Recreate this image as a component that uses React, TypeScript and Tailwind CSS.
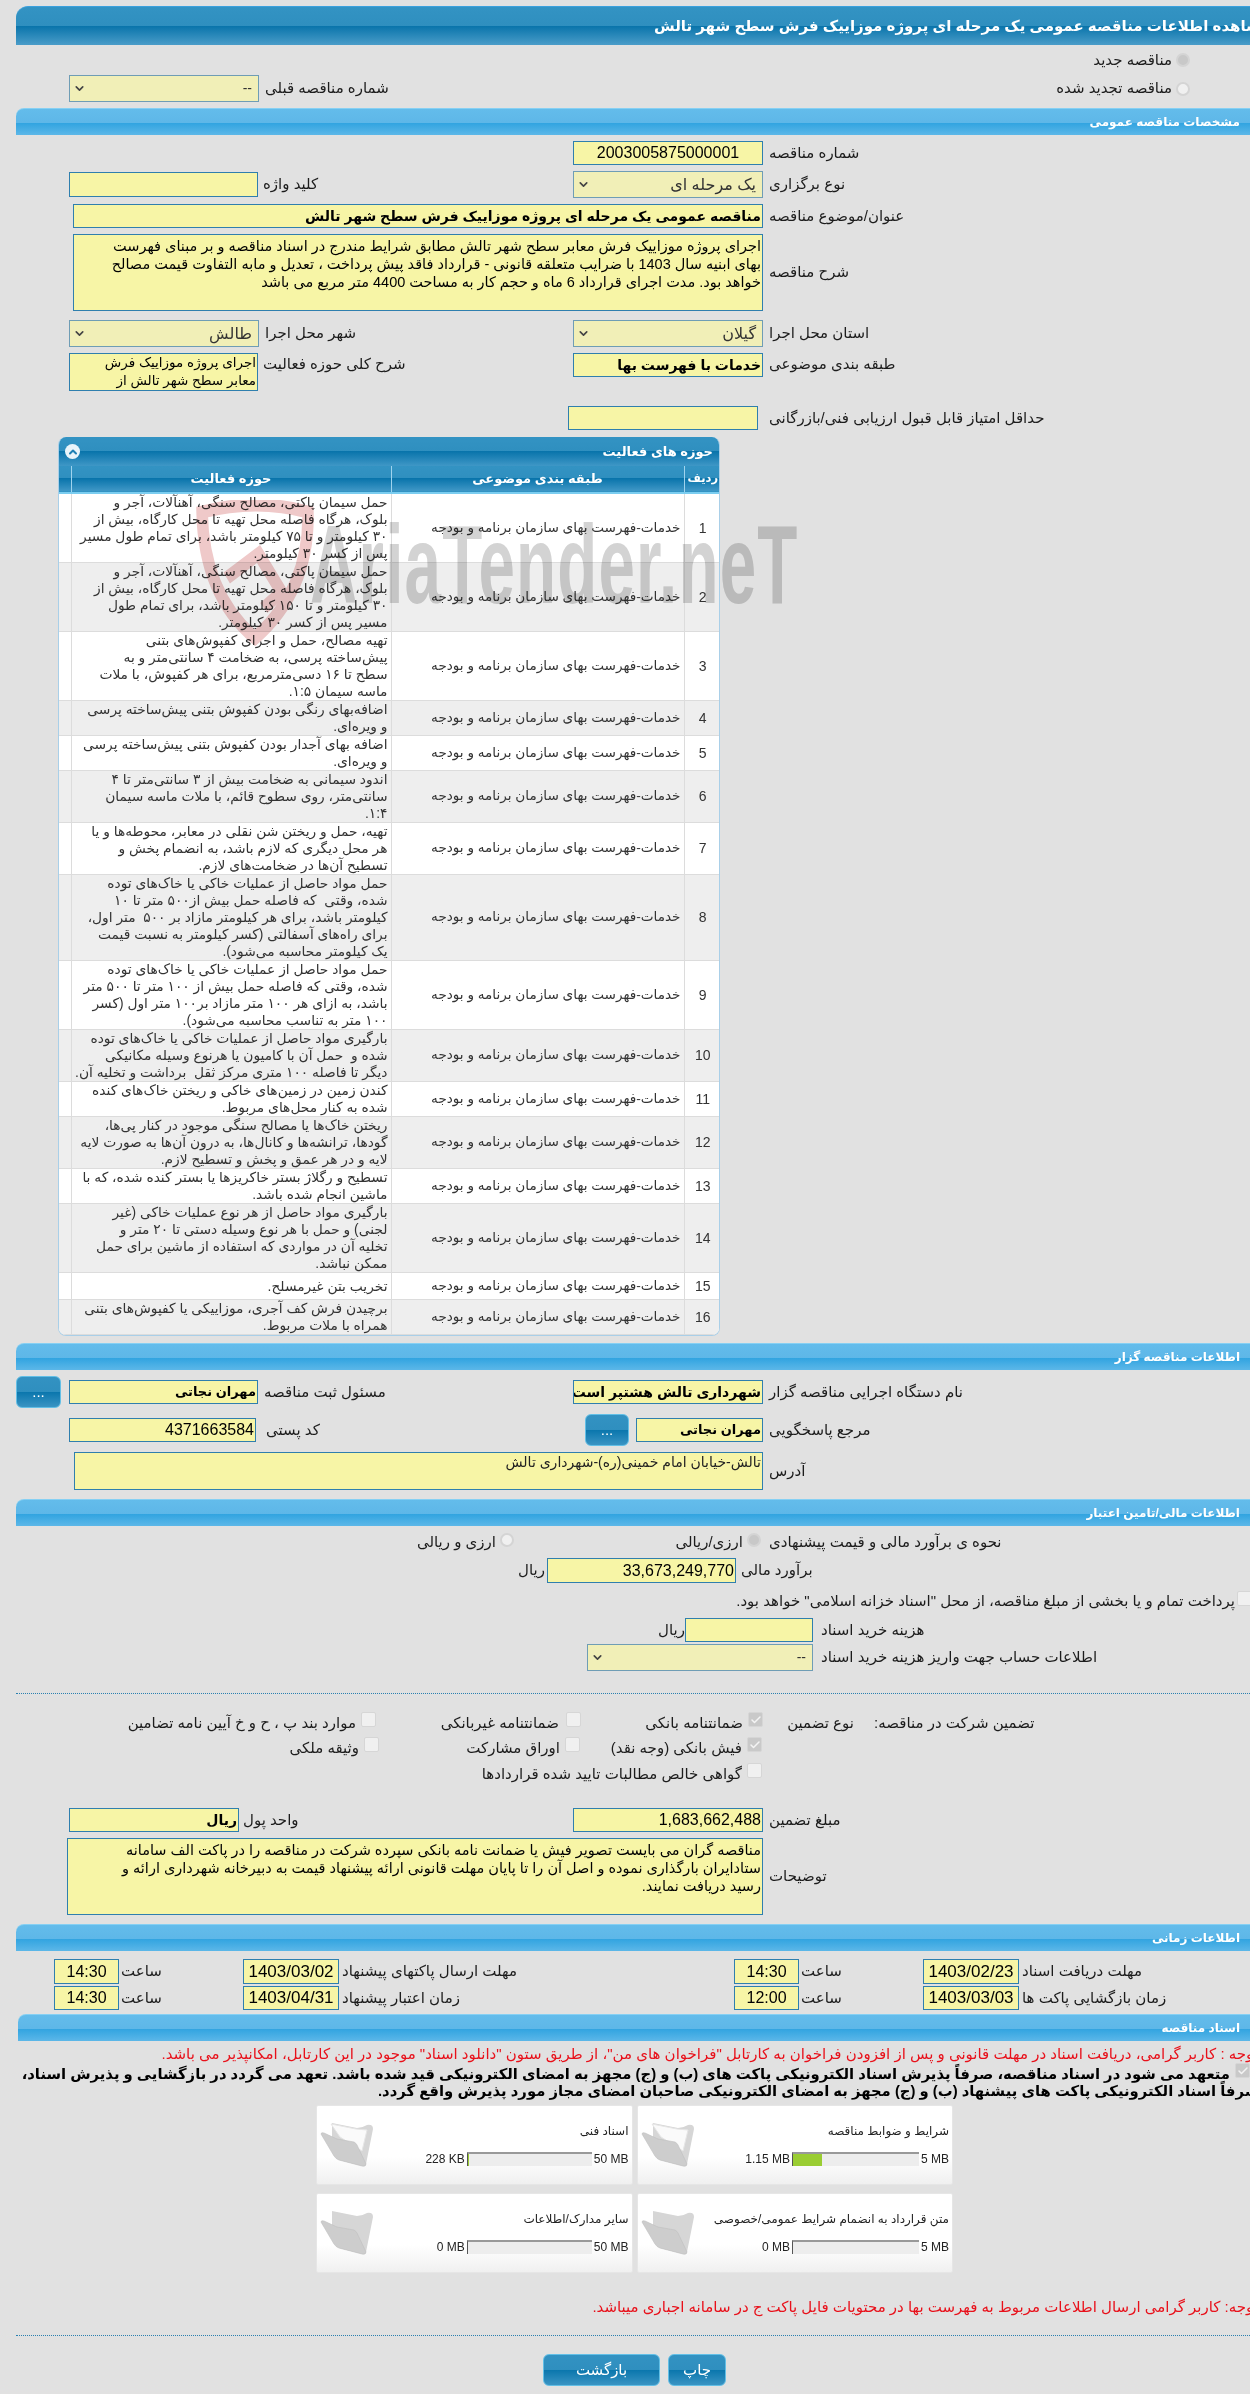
import type { ReactNode } from 'react'
import { Check, ChevronDown, ChevronUp } from 'lucide-react'

const BOX = 'flex shrink-0 items-center overflow-hidden whitespace-nowrap border border-[#2f7fae] bg-[#f7f5a6] px-px text-black'
const SELECT = 'flex shrink-0 items-center justify-between overflow-hidden whitespace-nowrap border border-[#6f9db5] bg-[#f1efb7] pl-[3px] pr-[6px] text-[#333]'

const ROWS: string[][] = [
  ['حمل سیمان پاکتی، مصالح سنگی، آهنآلات، آجر و', 'بلوک، هرگاه فاصله محل تهیه تا محل کارگاه، بیش از', '۳۰ کیلومتر و تا ۷۵ کیلومتر باشد، برای تمام طول مسیر', 'پس از کسر ۳۰ کیلومتر.'],
  ['حمل سیمان پاکتی، مصالح سنگی، آهنآلات، آجر و', 'بلوک، هرگاه فاصله محل تهیه تا محل کارگاه، بیش از', '۳۰ کیلومتر و تا ۱۵۰ کیلومتر باشد، برای تمام طول', 'مسیر پس از کسر ۳۰ کیلومتر.'],
  ['تهیه مصالح، حمل و اجرای کفپوش‌های بتنی', 'پیش‌ساخته پرسی، به ضخامت ۴ سانتی‌متر و به', 'سطح تا ۱۶ دسی‌مترمربع، برای هر کفپوش، با ملات', 'ماسه سیمان ۱:۵.'],
  ['اضافه‌بهای رنگی بودن کفپوش بتنی پیش‌ساخته پرسی', 'و ویره‌ای.'],
  ['اضافه بهای آجدار بودن کفپوش بتنی پیش‌ساخته پرسی', 'و ویره‌ای.'],
  ['اندود سیمانی به ضخامت بیش از ۳ سانتی‌متر تا ۴', 'سانتی‌متر، روی سطوح قائم، با ملات ماسه سیمان', '۱:۴.'],
  ['تهیه، حمل و ریختن شن نقلی در معابر، محوطه‌ها و یا', 'هر محل دیگری که لازم باشد، به انضمام پخش و', 'تسطیح آن‌ها در ضخامت‌های لازم.'],
  ['حمل مواد حاصل از عملیات خاکی یا خاک‌های توده', 'شده، وقتی  که فاصله حمل بیش از۵۰۰ متر تا ۱۰', 'کیلومتر باشد، برای هر کیلومتر مازاد بر ۵۰۰  متر اول،', 'برای راه‌های آسفالتی (کسر کیلومتر به نسبت قیمت', 'یک کیلومتر محاسبه می‌شود).'],
  ['حمل مواد حاصل از عملیات خاکی یا خاک‌های توده', 'شده، وقتی که فاصله حمل بیش از ۱۰۰ متر تا ۵۰۰ متر', 'باشد، به ازای هر ۱۰۰ متر مازاد بر۱۰۰ متر اول (کسر', '۱۰۰ متر به تناسب محاسبه می‌شود).'],
  ['بارگیری مواد حاصل از عملیات خاکی یا خاک‌های توده', 'شده و  حمل آن با کامیون یا هرنوع وسیله مکانیکی', 'دیگر تا فاصله ۱۰۰ متری مرکز ثقل  برداشت و تخلیه آن.'],
  ['کندن زمین در زمین‌های خاکی و ریختن خاک‌های کنده', 'شده به کنار محل‌های مربوط.'],
  ['ریختن خاک‌ها یا مصالح سنگی موجود در کنار پی‌ها،', 'گودها، ترانشه‌ها و کانال‌ها، به درون آن‌ها به صورت لایه', 'لایه و در هر عمق و پخش و تسطیح لازم.'],
  ['تسطیح و رگلاژ بستر خاکریزها یا بستر کنده شده، که با', 'ماشین انجام شده باشد.'],
  ['بارگیری مواد حاصل از هر نوع عملیات خاکی (غیر', 'لجنی) و حمل با هر نوع وسیله دستی تا ۲۰ متر و', 'تخلیه آن در مواردی که استفاده از ماشین برای حمل', 'ممکن نباشد.'],
  ['تخریب بتن غیرمسلح.'],
  ['برچیدن فرش کف آجری، موزاییکی یا کفپوش‌های بتنی', 'همراه با ملات مربوط.'],
]

const CARDS = [
  { title: 'شرایط و ضوابط مناقصه', value: '1.15 MB', max: '5 MB', pct: 23, bar: 'w-[127px]', paper: true },
  { title: 'اسناد فنی', value: '228 KB', max: '50 MB', pct: 1, bar: 'w-[125px]', paper: true },
  { title: 'متن قرارداد به انضمام شرایط عمومی/خصوصی', value: '0 MB', max: '5 MB', pct: 0, bar: 'w-[127px]', paper: false },
  { title: 'سایر مدارک/اطلاعات', value: '0 MB', max: '50 MB', pct: 0, bar: 'w-[125px]', paper: false },
]

function Bar({ children, className = '' }: { children: ReactNode; className?: string }) {
  return (
    <div className={`flex h-[27px] items-center justify-end rounded-tl-lg border-t border-[#86d0f3] bg-[linear-gradient(#63bceb_0%,#5eb7e8_52%,#2fa3e0_52%,#5cb7e8_100%)] pr-[10px] text-[12px] font-bold text-white ${className}`}>
      <span dir="rtl">{children}</span>
    </div>
  )
}

function Lbl({ children, className = '' }: { children: ReactNode; className?: string }) {
  return (
    <span dir="rtl" className={`shrink-0 whitespace-nowrap text-left text-[15px] text-[#1c1c1c] ${className}`}>
      {children}
    </span>
  )
}

function Sel({ value, className = '' }: { value: string; className?: string }) {
  return (
    <div className={`${SELECT} ${className}`}>
      <ChevronDown size={13} strokeWidth={3} color="#444" />
      <span dir="rtl">{value}</span>
    </div>
  )
}

function Box({ children, className = '' }: { children?: ReactNode; className?: string }) {
  return (
    <div dir="rtl" className={`${BOX} ${className}`}>
      {children}
    </div>
  )
}

function Radio({ on = false }: { on?: boolean }) {
  return (
    <span className={`block h-[14px] w-[14px] shrink-0 rounded-full border-2 border-[#d4d4d4] ${on ? 'bg-[#c8c8c8]' : 'bg-[#f0f0f0]'}`} />
  )
}

function Tick({ on = false, className = '' }: { on?: boolean; className?: string }) {
  return (
    <span className={`flex h-[15px] w-[15px] shrink-0 items-center justify-center rounded-[2px] border border-[#d6d6d6] ${on ? 'bg-[#c9c9c9]' : 'bg-[#f0f0f0]'} ${className}`}>
      {on && <Check size={12} strokeWidth={3} color="#f4f4f4" />}
    </span>
  )
}

function Btn({ children, className = '' }: { children: ReactNode; className?: string }) {
  return (
    <div className={`flex shrink-0 items-center justify-center rounded-[6px] border border-[#62bfe6] bg-[linear-gradient(#3392c2_0%,#2f8fbf_50%,#0a76ad_50%,#3a94c3_100%)] text-[15px] text-white ${className}`}>
      {children}
    </div>
  )
}

function Folder({ paper }: { paper: boolean }) {
  return (
    <svg width="54" height="46" viewBox="0 0 54 46" className="shrink-0">
      <path d="M12 2 L37 7 Q42 7 47 4 Q53 3 53 8 L46 43 Q45 46 42 45 L19 39 L12 20 Z" fill="#d6d6d6" />
      {paper && <path d="M11 3 L36 8 L47 9 L42 30 L20 16 Z" fill="#fafafa" stroke="#e6e6e6" />}
      <path d="M1 13 Q1 11 4 12 L17 18 L34 21 Q36 22 37 24 L46 43 Q46 46 42 45 L19 39 Q16 38 14 35 Z" fill="#cdcdcd" stroke="#c0c0c0" strokeWidth="0.6" />
    </svg>
  )
}

function Watermark() {
  return (
    <div className="pointer-events-none absolute left-[195px] top-[490px] flex h-[150px] w-[620px] items-center mix-blend-multiply">
      <svg width="120" height="146" viewBox="0 0 136 146" preserveAspectRatio="none" className="mt-[16px] shrink-0">
        <path d="M8 12 Q70 -2 128 12 Q130 90 68 138 Q10 95 8 12 Z" fill="none" stroke="#efc9c9" strokeWidth="13" />
        <path d="M36 78 L72 54 L98 92 L78 108" fill="none" stroke="#efc9c9" strokeWidth="13" />
      </svg>
      <span className="-ml-[5px] origin-left scale-x-[0.585] whitespace-nowrap text-[112px] font-bold leading-none tracking-[2px] text-[#d3d3d3]">
        AriaTender.neT
      </span>
    </div>
  )
}

export default function App() {
  return (
    <div className="relative h-[2394px] w-[1250px] overflow-hidden bg-[#e1e1e1] pt-[6px] [font-family:'Liberation_Sans','DejaVu_Sans',sans-serif]">
      {/* Header */}
      <div className="ml-[16px] flex h-[39px] items-center overflow-hidden rounded-tl-xl border-t border-[#3ba0dd] bg-[linear-gradient(#3393c3_0%,#2f8fbf_50%,#0974ab_50%,#4a9cc8_100%)]">
        <span dir="rtl" className="ml-[638px] whitespace-nowrap text-[15px] font-bold text-white">
          مشاهده اطلاعات مناقصه عمومی یک مرحله ای پروژه موزاییک فرش سطح شهر تالش
        </span>
      </div>

      <div className="flex h-[30px] items-center justify-end gap-[4px] pr-[60px]">
        <Lbl>مناقصه جدید</Lbl>
        <Radio on />
      </div>
      <div className="flex h-[27px] items-center">
        <Sel value="--" className="ml-[69px] h-[27px] w-[190px] text-[14px]" />
        <Lbl className="ml-[6px]">شماره مناقصه قبلی</Lbl>
        <div className="ml-auto flex items-center gap-[4px] pr-[60px]">
          <Lbl>مناقصه تجدید شده</Lbl>
          <Radio />
        </div>
      </div>

      <Bar className="ml-[16px] mt-[6px]">مشخصات مناقصه عمومی</Bar>

      <div className="mt-[6px] flex h-[24px] items-center">
        <div className="w-[573px]" />
        <Box className="h-[24px] w-[190px] justify-center text-[16px]">2003005875000001</Box>
        <Lbl className="ml-[6px]">شماره مناقصه</Lbl>
      </div>
      <div className="mt-[6px] flex h-[27px] items-center">
        <Box className="ml-[69px] h-[25px] w-[189px]" />
        <Lbl className="ml-[5px] w-[310px]">کلید واژه</Lbl>
        <Sel value="یک مرحله ای" className="h-[27px] w-[190px] text-[16px]" />
        <Lbl className="ml-[6px]">نوع برگزاری</Lbl>
      </div>
      <div className="mt-[6px] flex h-[24px] items-center">
        <Box className="ml-[73px] h-[24px] w-[690px] text-[14px] font-bold">
          مناقصه عمومی یک مرحله ای پروژه موزاییک فرش سطح شهر تالش
        </Box>
        <Lbl className="ml-[6px]">عنوان/موضوع مناقصه</Lbl>
      </div>
      <div className="mt-[6px] flex h-[77px] items-center">
        <div dir="rtl" className="ml-[73px] h-[77px] w-[690px] shrink-0 overflow-hidden border border-[#2f7fae] bg-[#f7f5a6] px-px pt-[2px] text-[14.5px] leading-[18px] text-black">
          <div className="whitespace-nowrap">اجرای پروژه موزاییک فرش معابر سطح شهر تالش مطابق شرایط مندرج در اسناد مناقصه و بر مبنای فهرست</div>
          <div className="whitespace-nowrap">بهای ابنیه سال 1403 با ضرایب متعلقه قانونی - قرارداد فاقد پیش پرداخت ، تعدیل و مابه التفاوت قیمت مصالح</div>
          <div className="whitespace-nowrap">خواهد بود. مدت اجرای قرارداد 6 ماه و حجم کار به مساحت 4400 متر مربع می باشد</div>
        </div>
        <Lbl className="ml-[6px]">شرح مناقصه</Lbl>
      </div>
      <div className="mt-[9px] flex h-[27px] items-center">
        <Sel value="طالش" className="ml-[69px] h-[27px] w-[190px] text-[16px]" />
        <Lbl className="ml-[6px] w-[308px]">شهر محل اجرا</Lbl>
        <Sel value="گیلان" className="h-[27px] w-[190px] text-[16px]" />
        <Lbl className="ml-[6px]">استان محل اجرا</Lbl>
      </div>
      <div className="mt-[6px] flex h-[38px] items-start">
        <div dir="rtl" className="ml-[69px] h-[38px] w-[189px] shrink-0 overflow-hidden border border-[#2f7fae] bg-[#f7f5a6] px-px text-[13.5px] leading-[18px] text-black">
          <div className="whitespace-nowrap">اجرای پروژه موزاییک فرش</div>
          <div className="whitespace-nowrap">معابر سطح شهر تالش از</div>
        </div>
        <Lbl className="ml-[5px] w-[310px]">شرح کلی حوزه فعالیت</Lbl>
        <Box className="h-[24px] w-[190px] text-[14px] font-bold">خدمات با فهرست بها</Box>
        <Lbl className="ml-[6px]">طبقه بندی موضوعی</Lbl>
      </div>
      <div className="mt-[15px] flex h-[24px] items-center">
        <Box className="ml-[568px] h-[24px] w-[190px]" />
        <Lbl className="ml-[11px]">حداقل امتیاز قابل قبول ارزیابی فنی/بازرگانی</Lbl>
      </div>

      {/* Activity table */}
      <div className="ml-[58px] mt-[7px] w-[662px] overflow-hidden rounded-lg border-x border-b border-[#a9cfe8] bg-white">
        <div className="flex h-[29px] items-center justify-between bg-[linear-gradient(#3393c3_0%,#2f8fbf_50%,#0974ab_50%,#3f97c6_100%)] px-[6px] text-white">
          <span className="flex h-[15px] w-[15px] items-center justify-center rounded-full bg-[#e8f4fa]">
            <ChevronUp size={12} strokeWidth={4} color="#1f80b4" />
          </span>
          <span dir="rtl" className="text-[13px] font-bold">حوزه های فعالیت</span>
        </div>
        <table dir="rtl" className="w-full table-fixed border-collapse text-[#333]">
          <thead>
            <tr className="h-[27px] border-b-2 border-[#7bcdf0] bg-[linear-gradient(#3393c3_0%,#2f8fbf_50%,#0974ab_50%,#3f97c6_100%)] text-white">
              <th className="w-[37px] whitespace-nowrap border-l border-[#9fd3ee] text-[11.5px] font-bold">ردیف</th>
              <th className="w-[293px] border-l border-[#9fd3ee] text-[13px] font-bold">طبقه بندی موضوعی</th>
              <th className="w-[320px] border-l border-[#9fd3ee] text-[13px] font-bold">حوزه فعالیت</th>
              <th className="w-[12px]" />
            </tr>
          </thead>
          <tbody>
            {ROWS.map((lines, i) => (
              <tr key={i} className={`border-b border-[#dcdcdc] ${i % 2 === 1 ? 'bg-[#eeeeee]' : 'bg-white'} ${lines.length === 1 ? 'h-[27px]' : ''}`}>
                <td className="border-l border-[#dcdcdc] text-center text-[14px]">{i + 1}</td>
                <td className="whitespace-nowrap border-l border-[#dcdcdc] pr-[3px] text-[13.6px]">خدمات-فهرست بهای سازمان برنامه و بودجه</td>
                <td className="border-l border-[#dcdcdc] pr-[3px] text-[13.8px] leading-[17px]">
                  {lines.map((line) => (
                    <div key={line} className="whitespace-pre">{line}</div>
                  ))}
                </td>
                <td />
              </tr>
            ))}
          </tbody>
        </table>
      </div>

      {/* Tender giver */}
      <Bar className="ml-[16px] mt-[7px]">اطلاعات مناقصه گزار</Bar>
      <div className="mt-[6px] flex h-[32px] items-center">
        <Btn className="ml-[16px] h-[32px] w-[45px]">...</Btn>
        <Box className="ml-[8px] h-[24px] w-[189px] text-[13px] font-bold">مهران نجاتی</Box>
        <Lbl className="ml-[6px] w-[309px]">مسئول ثبت مناقصه</Lbl>
        <Box className="h-[24px] w-[190px] text-[14px] font-bold">شهرداری تالش هشتپر است</Box>
        <Lbl className="ml-[6px]">نام دستگاه اجرایی مناقصه گزار</Lbl>
      </div>
      <div className="mt-[6px] flex h-[32px] items-center">
        <Box className="ml-[69px] h-[24px] w-[187px] text-[16px]">4371663584</Box>
        <Lbl className="ml-[10px] w-[319px]">کد پستی</Lbl>
        <Btn className="h-[32px] w-[44px]">...</Btn>
        <Box className="ml-[7px] h-[24px] w-[127px] text-[13px] font-bold">مهران نجاتی</Box>
        <Lbl className="ml-[6px]">مرجع پاسخگویی</Lbl>
      </div>
      <div className="mt-[6px] flex h-[38px] items-center">
        <div dir="rtl" className="ml-[74px] h-[38px] w-[689px] shrink-0 whitespace-nowrap border border-[#2f7fae] bg-[#f7f5a6] px-px text-[14px] leading-[18px] text-[#222]">
          تالش-خیابان امام خمینی(ره)-شهرداری تالش
        </div>
        <Lbl className="ml-[6px]">آدرس</Lbl>
      </div>

      {/* Funding */}
      <Bar className="ml-[16px] mt-[9px]">اطلاعات مالی/تامین اعتبار</Bar>
      <div className="mt-[5px] flex h-[22px] items-center">
        <Lbl className="ml-[418px] w-[78px] text-right">ارزی و ریالی</Lbl>
        <span className="-mt-[4px] ml-[4px]"><Radio /></span>
        <span className="w-[162px]" />
        <Lbl className="w-[67px] text-right">ارزی/ریالی</Lbl>
        <span className="-mt-[4px] ml-[4px]"><Radio on /></span>
        <Lbl className="ml-[8px]">نحوه ی برآورد مالی و قیمت پیشنهادی</Lbl>
      </div>
      <div className="mt-[5px] flex h-[25px] items-center">
        <Lbl className="ml-[518px] w-[29px]">ریال</Lbl>
        <Box className="h-[25px] w-[189px] text-[16px]">33,673,249,770</Box>
        <Lbl className="ml-[5px]">برآورد مالی</Lbl>
      </div>
      <div className="mt-[8px] flex h-[15px] items-center justify-end">
        <Lbl className="mr-[2px] mt-[6px]">پرداخت تمام و یا بخشی از مبلغ مناقصه، از محل "اسناد خزانه اسلامی" خواهد بود.</Lbl>
        <Tick className="-mr-[2px]" />
      </div>
      <div className="mt-[12px] flex h-[24px] items-center">
        <Lbl className="ml-[662px] w-[23px]">ریال</Lbl>
        <Box className="h-[24px] w-[128px]" />
        <Lbl className="ml-[8px]">هزینه خرید اسناد</Lbl>
      </div>
      <div className="mt-[2px] flex h-[27px] items-center">
        <Sel value="--" className="ml-[587px] h-[27px] w-[226px] text-[14px]" />
        <Lbl className="ml-[8px]">اطلاعات حساب جهت واریز هزینه خرید اسناد</Lbl>
      </div>
      <div className="ml-[16px] mt-[22px] border-t border-dotted border-[#2a80b0]" />

      {/* Guarantee */}
      <div className="mt-[18px] flex h-[15px] items-center">
        <Lbl className="ml-[150px] mt-[8px] w-[206px] text-right">موارد بند پ ، ح و خ آیین نامه تضامین</Lbl>
        <Tick className="ml-[5px]" />
        <Lbl className="ml-[53px] mt-[8px] w-[130px] text-right">ضمانتنامه غیربانکی</Lbl>
        <Tick className="ml-[7px]" />
        <Lbl className="ml-[23px] mt-[8px] w-[139px] text-right">ضمانتنامه بانکی</Lbl>
        <Tick on className="ml-[5px]" />
        <Lbl className="ml-[26px] mt-[8px] w-[65px] text-right">نوع تضمین</Lbl>
        <Lbl className="ml-[20px] mt-[8px]">تضمین شرکت در مناقصه:</Lbl>
      </div>
      <div className="mt-[10px] flex h-[15px] items-center">
        <Lbl className="ml-[200px] mt-[8px] w-[159px] text-right">وثیقه ملکی</Lbl>
        <Tick className="ml-[5px]" />
        <Lbl className="ml-[51px] mt-[8px] w-[130px] text-right">اوراق مشارکت</Lbl>
        <Tick className="ml-[5px]" />
        <Lbl className="ml-[23px] mt-[8px] w-[139px] text-right">فیش بانکی (وجه نقد)</Lbl>
        <Tick on className="ml-[5px]" />
      </div>
      <div className="mt-[11px] flex h-[15px] items-center">
        <Lbl className="ml-[420px] mt-[8px] w-[322px] text-right">گواهی خالص مطالبات تایید شده قراردادها</Lbl>
        <Tick className="ml-[5px]" />
      </div>
      <div className="mt-[30px] flex h-[24px] items-center">
        <Box className="ml-[69px] h-[24px] w-[170px] text-[14px] font-bold">ریال</Box>
        <Lbl className="ml-[4px] w-[330px]">واحد پول</Lbl>
        <Box className="h-[24px] w-[190px] text-[16px]">1,683,662,488</Box>
        <Lbl className="ml-[6px]">مبلغ تضمین</Lbl>
      </div>
      <div className="mt-[6px] flex h-[77px] items-center">
        <div dir="rtl" className="ml-[67px] h-[77px] w-[696px] shrink-0 overflow-hidden border border-[#2f7fae] bg-[#f7f5a6] px-px pt-[2px] text-[14.5px] leading-[18px] text-black">
          <div className="whitespace-nowrap">مناقصه گران می بایست تصویر فیش یا ضمانت نامه بانکی سپرده شرکت در مناقصه را در پاکت الف سامانه</div>
          <div className="whitespace-nowrap">ستادایران بارگذاری نموده و اصل آن را تا پایان مهلت قانونی ارائه پیشنهاد قیمت به دبیرخانه شهرداری ارائه و</div>
          <div className="whitespace-nowrap">رسید دریافت نمایند.</div>
        </div>
        <Lbl className="ml-[6px]">توضیحات</Lbl>
      </div>

      {/* Dates */}
      <Bar className="ml-[16px] mt-[9px]">اطلاعات زمانی</Bar>
      <div className="mt-[8px] flex h-[25px] items-center">
        <Box className="ml-[54px] h-[25px] w-[65px] justify-center text-[16px]">14:30</Box>
        <Lbl className="ml-[2px] w-[122px]">ساعت</Lbl>
        <Box className="h-[25px] w-[96px] justify-center text-[17px]">1403/03/02</Box>
        <Lbl className="ml-[3px] w-[392px]">مهلت ارسال پاکتهای پیشنهاد</Lbl>
        <Box className="h-[25px] w-[65px] justify-center text-[16px]">14:30</Box>
        <Lbl className="ml-[2px] w-[122px]">ساعت</Lbl>
        <Box className="h-[25px] w-[96px] justify-center text-[17px]">1403/02/23</Box>
        <Lbl className="ml-[3px]">مهلت دریافت اسناد</Lbl>
      </div>
      <div className="mt-[2px] flex h-[24px] items-center">
        <Box className="ml-[54px] h-[24px] w-[65px] justify-center text-[16px]">14:30</Box>
        <Lbl className="ml-[2px] w-[122px]">ساعت</Lbl>
        <Box className="h-[24px] w-[96px] justify-center text-[17px]">1403/04/31</Box>
        <Lbl className="ml-[3px] w-[392px]">زمان اعتبار پیشنهاد</Lbl>
        <Box className="h-[24px] w-[65px] justify-center text-[16px]">12:00</Box>
        <Lbl className="ml-[2px] w-[122px]">ساعت</Lbl>
        <Box className="h-[24px] w-[96px] justify-center text-[17px]">1403/03/03</Box>
        <Lbl className="ml-[3px]">زمان بازگشایی پاکت ها</Lbl>
      </div>

      {/* Documents */}
      <Bar className="ml-[18px] mt-[4px]">اسناد مناقصه</Bar>
      <div dir="rtl" className="-mr-[8px] mt-[3px] h-[20px] whitespace-nowrap text-[15px] leading-[20px] text-[#e8101a]">
        توجه : کاربر گرامی، دریافت اسناد در مهلت قانونی و پس از افزودن فراخوان به کارتابل "فراخوان های من"، از طریق ستون "دانلود اسناد" موجود در این کارتابل، امکانپذیر می باشد.
      </div>
      <div dir="rtl" className="-mr-[9px] mt-[2px] text-[14.8px] font-bold leading-[17px] text-black">
        <div className="flex whitespace-nowrap">
          <Tick on className="-mt-[3px] ml-[5px] mr-[9px]" />
          <span>متعهد می شود در اسناد مناقصه، صرفاً پذیرش اسناد الکترونیکی پاکت های (ب) و (ج) مجهز به امضای الکترونیکی قید شده باشد. تعهد می گردد در بازگشایی و پذیرش اسناد،</span>
        </div>
        <div className="whitespace-nowrap">صرفاً اسناد الکترونیکی پاکت های پیشنهاد (ب) و (ج) مجهز به امضای الکترونیکی صاحبان امضای مجاز مورد پذیرش واقع گردد.</div>
      </div>
      <div className="ml-[316px] mt-[5px] grid w-[637px] grid-cols-2 gap-x-[4px] gap-y-[8px]" dir="rtl">
        {CARDS.map((c) => (
          <div key={c.title} dir="ltr" className="flex h-[80px] items-start rounded-[2px] border border-[#e6e6e6] bg-[linear-gradient(#ffffff_0%,#ffffff_65%,#f0f0f0_100%)] pl-[3px]">
            <div className="mt-[15px]"><Folder paper={c.paper} /></div>
            <div className="flex min-w-0 flex-1 flex-col items-end pr-[3px]">
              <span dir="rtl" className="mt-[16px] whitespace-nowrap text-[12px] text-[#222]">{c.title}</span>
              <div className="mt-[10px] flex items-center gap-[2px] text-[12px] text-[#222]">
                <span>{c.value}</span>
                <div className={`h-[14px] border-l border-t-2 border-l-[#555] border-t-[#999] bg-[#ededed] ${c.bar}`}>
                  <div className="h-full bg-[#9acd32]" style={{ width: `${c.pct}%` }} />
                </div>
                <span>{c.max}</span>
              </div>
            </div>
          </div>
        ))}
      </div>
      <div dir="rtl" className="-mr-[8px] mt-[24px] h-[20px] whitespace-nowrap text-[15px] leading-[20px] text-[#e8101a]">
        توجه: کاربر گرامی ارسال اطلاعات مربوط به فهرست بها در محتویات فایل پاکت ج در سامانه اجباری میباشد.
      </div>
      <div className="ml-[16px] mt-[18px] border-t border-dotted border-[#2a80b0]" />
      <div className="ml-[543px] mt-[18px] flex gap-[8px]">
        <Btn className="h-[32px] w-[117px]">بازگشت</Btn>
        <Btn className="h-[32px] w-[58px]">چاپ</Btn>
      </div>

      <Watermark />
    </div>
  )
}
